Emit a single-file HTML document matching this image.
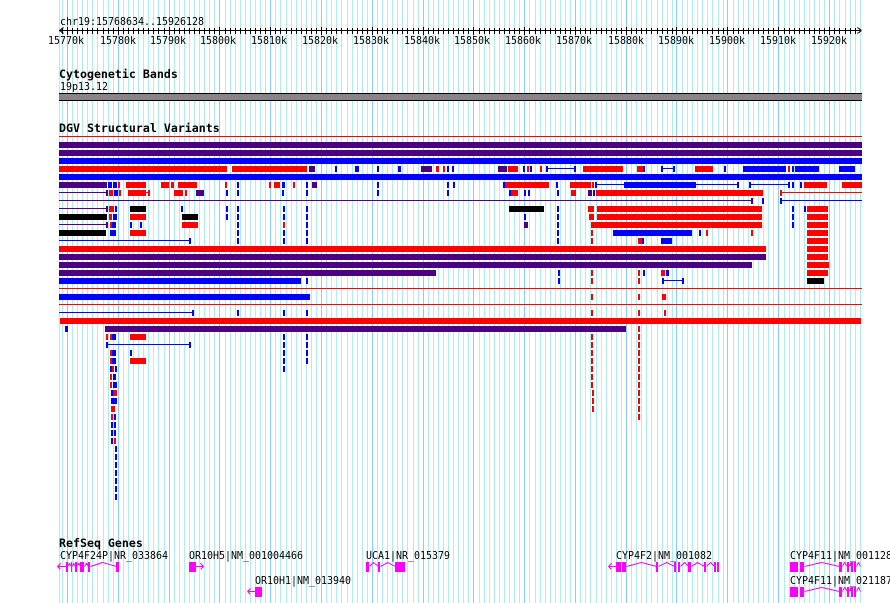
<!DOCTYPE html>
<html><head><meta charset="utf-8"><title>chr19</title>
<style>
html,body{margin:0;padding:0;background:#fff;width:890px;height:603px;overflow:hidden}
svg{display:block;position:absolute;left:0;top:0}
.r{fill:#f00}.b{fill:#00f}.p{fill:#4b0082}.k{fill:#000}
text{font-family:"DejaVu Sans Mono","Liberation Mono",monospace;font-size:11px;fill:#000}
text.t{font-weight:bold;font-size:11.62px}
.g{fill:#f0f}.gl{fill:none;stroke:#f0f;stroke-width:1}
</style></head><body>
<svg width="890" height="603" viewBox="0 0 890 603" shape-rendering="crispEdges">
<defs>
<path id="mn" d="M59 0V603M62 0V603M72 0V603M77 0V603M82 0V603M87 0V603M92 0V603M97 0V603M103 0V603M108 0V603M113 0V603M123 0V603M128 0V603M133 0V603M138 0V603M143 0V603M148 0V603M153 0V603M158 0V603M164 0V603M174 0V603M179 0V603M184 0V603M189 0V603M194 0V603M199 0V603M204 0V603M209 0V603M214 0V603M225 0V603M230 0V603M235 0V603M240 0V603M245 0V603M250 0V603M255 0V603M260 0V603M265 0V603M275 0V603M280 0V603M286 0V603M291 0V603M296 0V603M301 0V603M306 0V603M311 0V603M316 0V603M326 0V603M331 0V603M336 0V603M341 0V603M347 0V603M352 0V603M357 0V603M362 0V603M367 0V603M377 0V603M382 0V603M387 0V603M392 0V603M397 0V603M402 0V603M407 0V603M413 0V603M418 0V603M428 0V603M433 0V603M438 0V603M443 0V603M448 0V603M453 0V603M458 0V603M463 0V603M468 0V603M479 0V603M484 0V603M489 0V603M494 0V603M499 0V603M504 0V603M509 0V603M514 0V603M519 0V603M529 0V603M535 0V603M540 0V603M545 0V603M550 0V603M555 0V603M560 0V603M565 0V603M570 0V603M580 0V603M585 0V603M590 0V603M596 0V603M601 0V603M606 0V603M611 0V603M616 0V603M621 0V603M631 0V603M636 0V603M641 0V603M646 0V603M651 0V603M657 0V603M662 0V603M667 0V603M672 0V603M682 0V603M687 0V603M692 0V603M697 0V603M702 0V603M707 0V603M712 0V603M718 0V603M723 0V603M733 0V603M738 0V603M743 0V603M748 0V603M753 0V603M758 0V603M763 0V603M768 0V603M773 0V603M784 0V603M789 0V603M794 0V603M799 0V603M804 0V603M809 0V603M814 0V603M819 0V603M824 0V603M834 0V603M839 0V603M845 0V603M850 0V603M855 0V603M860 0V603"/>
<path id="mj" d="M67 0V603M118 0V603M169 0V603M219 0V603M270 0V603M321 0V603M372 0V603M423 0V603M473 0V603M524 0V603M575 0V603M626 0V603M676 0V603M727 0V603M778 0V603M829 0V603"/>
<clipPath id="c1"><rect x="60" y="28" width="800" height="6"/></clipPath>
<clipPath id="c2"><rect x="60" y="27" width="800" height="8"/></clipPath>
</defs>
<g transform="translate(.5 0)" fill="none" stroke-width="1">
<use href="#mn" stroke="#afeeee"/>
<use href="#mj" stroke="#87cefa"/>
</g>

<!-- ruler -->
<text x="60" y="25" textLength="144" lengthAdjust="spacingAndGlyphs">chr19:15768634..15926128</text>
<rect x="59" y="30" width="802" height="1" fill="#000"/>
<g clip-path="url(#c1)"><g transform="translate(.5 0)" fill="none" stroke="#000"><use href="#mn"/></g></g>
<g clip-path="url(#c2)"><g transform="translate(.5 0)" fill="none" stroke="#000"><use href="#mj"/></g></g>
<path d="M59.5 30.5L63.5 27.5M59.5 30.5L63.5 33.5M861.5 30.5L857.5 27.5M861.5 30.5L857.5 33.5" stroke="#000" fill="none"/>
<g>
<text x="48" y="44" textLength="36" lengthAdjust="spacingAndGlyphs">15770k</text><text x="100" y="44" textLength="36" lengthAdjust="spacingAndGlyphs">15780k</text><text x="150" y="44" textLength="36" lengthAdjust="spacingAndGlyphs">15790k</text><text x="200" y="44" textLength="36" lengthAdjust="spacingAndGlyphs">15800k</text><text x="251" y="44" textLength="36" lengthAdjust="spacingAndGlyphs">15810k</text><text x="302" y="44" textLength="36" lengthAdjust="spacingAndGlyphs">15820k</text><text x="353" y="44" textLength="36" lengthAdjust="spacingAndGlyphs">15830k</text><text x="404" y="44" textLength="36" lengthAdjust="spacingAndGlyphs">15840k</text><text x="454" y="44" textLength="36" lengthAdjust="spacingAndGlyphs">15850k</text><text x="505" y="44" textLength="36" lengthAdjust="spacingAndGlyphs">15860k</text><text x="556" y="44" textLength="36" lengthAdjust="spacingAndGlyphs">15870k</text><text x="608" y="44" textLength="36" lengthAdjust="spacingAndGlyphs">15880k</text><text x="658" y="44" textLength="36" lengthAdjust="spacingAndGlyphs">15890k</text><text x="709" y="44" textLength="36" lengthAdjust="spacingAndGlyphs">15900k</text><text x="760" y="44" textLength="36" lengthAdjust="spacingAndGlyphs">15910k</text><text x="811" y="44" textLength="36" lengthAdjust="spacingAndGlyphs">15920k</text>
</g>

<!-- cytoband -->
<text class="t" x="59" y="78">Cytogenetic Bands</text>
<text x="60" y="90" textLength="48" lengthAdjust="spacingAndGlyphs">19p13.12</text>
<rect x="59" y="93" width="803" height="8" fill="#000"/>
<rect x="59" y="94" width="803" height="6" fill="#888488"/>

<!-- DGV -->
<text class="t" x="59" y="132">DGV Structural Variants</text>
<rect class="r" x="59" y="136" width="803" height="1"/>
<rect class="p" x="59" y="142" width="803" height="6"/>
<rect class="p" x="59" y="150" width="803" height="6"/>
<rect class="b" x="59" y="158" width="803" height="6"/>

<g transform="translate(0 166)">
<path class="r" d="M59 0H227v6H59zM232 0H307v6H232zM436 0H439v6H436zM443 0H445v6H443zM508 0H518v6H508zM527 0H529v6H527zM540 0H542v6H540zM583 0H623v6H583zM637 0H643v6H637zM695 0H713v6H695zM788 0H790v6H788z"/>
<path class="p" d="M309 0H315v6H309zM421 0H432v6H421zM498 0H507v6H498z"/>
<path class="b" d="M335 0H337v6H335zM355 0H359v6H355zM377 0H379v6H377zM398 0H401v6H398zM447 0H449v6H447zM452 0H454v6H452zM523 0H525v6H523zM530 0H532v6H530zM546 0H548v6H546zM548 2H574v1H548zM574 0H576v6H574zM643 0H645v6H643zM661 0H663v6H661zM663 2H673v1H663zM673 0H675v6H673zM724 0H726v6H724zM743 0H786v6H743zM792 0H794v6H792zM795 0H819v6H795zM839 0H855v6H839z"/>
</g>
<rect class="b" x="59" y="174" width="803" height="6"/>

<g transform="translate(0 182)">
<path class="p" d="M59 0H107v6H59zM312 0H317v6H312z"/>
<path class="b" d="M108 0H112v6H108zM113 0H117v6H113zM237 0H239v6H237zM282 0H285v6H282zM306 0H308v6H306zM377 0H379v6H377zM447 0H449v6H447zM453 0H455v6H453zM503 0H505v6H503zM556 0H558v6H556zM595 0H597v6H595zM597 2H624v1H597zM624 0H696v6H624zM696 2H737v1H696zM737 0H739v6H737zM749 0H751v6H749zM751 2H788v1H751zM788 0H790v6H788zM792 0H794v6H792zM800 0H802v6H800z"/>
<path class="r" d="M118 0H120v6H118zM126 0H146v6H126zM161 0H169v6H161zM171 0H174v6H171zM178 0H197v6H178zM225 0H227v6H225zM269 0H271v6H269zM274 0H280v6H274zM293 0H295v6H293zM505 0H549v6H505zM570 0H591v6H570zM592 0H594v6H592zM804 0H827v6H804zM842 0H862v6H842z"/>
</g>

<g transform="translate(0 190)">
<path class="p" d="M59 2H106v1H59zM106 0H108v6H106zM196 0H204v6H196zM588 0H592v6H588z"/>
<path class="r" d="M109 0H113v6H109zM119 0H121v6H119zM128 0H146v6H128zM146 2H148v1H146zM148 0H150v6H148zM174 0H183v6H174zM185 0H187v6H185zM511 0H518v6H511zM571 0H576v6H571zM596 0H763v6H596zM780 0H782v6H780zM782 2H862v1H782z"/>
<path class="b" d="M114 0H118v6H114zM226 0H228v6H226zM237 0H239v6H237zM282 0H284v6H282zM306 0H308v6H306zM377 0H379v6H377zM447 0H449v6H447zM509 0H511v6H509zM524 0H526v6H524zM528 0H530v6H528zM557 0H559v6H557zM593 0H595v6H593z"/>
</g>

<g transform="translate(0 198)">
<path class="p" d="M59 2H751v1H59zM751 0H753v6H751z"/>
<path class="b" d="M762 0H764v6H762zM780 0H782v6H780zM782 2H862v1H782z"/>
</g>

<g transform="translate(0 206)">
<path class="p" d="M59 2H106v1H59zM106 0H108v6H106z"/>
<path class="r" d="M109 0H114v6H109zM588 0H594v6H588zM597 0H762v6H597zM807 0H828v6H807z"/>
<path class="b" d="M115 0H117v6H115zM181 0H183v6H181zM226 0H228v6H226zM237 0H239v6H237zM283 0H285v6H283zM306 0H308v6H306zM557 0H559v6H557zM792 0H794v6H792zM804 0H806v6H804z"/>
<path class="k" d="M130 0H146v6H130zM509 0H544v6H509z"/>
</g>

<g transform="translate(0 214)">
<path class="k" d="M59 0H107v6H59zM182 0H198v6H182z"/>
<path class="r" d="M109 0H112v6H109zM130 0H146v6H130zM589 0H594v6H589zM597 0H762v6H597zM807 0H828v6H807z"/>
<path class="b" d="M113 0H117v6H113zM226 0H228v6H226zM237 0H239v6H237zM283 0H285v6H283zM306 0H308v6H306zM524 0H526v6H524zM557 0H559v6H557zM792 0H794v6H792z"/>
</g>

<g transform="translate(0 222)">
<path class="p" d="M59 2H106v1H59zM106 0H108v6H106zM524 0H528v6H524z"/>
<path class="r" d="M110 0H112v6H110zM182 0H198v6H182zM283 0H285v6H283zM591 0H762v6H591zM807 0H828v6H807z"/>
<path class="b" d="M112 0H116v6H112zM130 0H132v6H130zM140 0H142v6H140zM237 0H239v6H237zM306 0H308v6H306zM557 0H559v6H557zM792 0H794v6H792z"/>
</g>

<g transform="translate(0 230)">
<path class="k" d="M59 0H106v6H59z"/>
<path class="b" d="M110 0H116v6H110zM237 0H239v6H237zM283 0H285v6H283zM306 0H308v6H306zM557 0H559v6H557zM613 0H692v6H613zM699 0H701v6H699z"/>
<path class="r" d="M130 0H146v6H130zM591 0H593v6H591zM706 0H708v6H706zM751 0H753v6H751zM807 0H828v6H807z"/>
</g>

<g transform="translate(0 238)">
<path class="b" d="M59 2H189v1H59zM189 0H191v6H189zM237 0H239v6H237zM283 0H285v6H283zM306 0H308v6H306zM557 0H559v6H557zM642 0H644v6H642zM661 0H672v6H661z"/>
<path class="r" d="M591 0H593v6H591zM638 0H642v6H638zM807 0H828v6H807z"/>
</g>

<g class="r"><rect x="59" y="246" width="707" height="6"/><rect x="807" y="246" width="21" height="6"/><rect x="807" y="254" width="21" height="6"/><rect x="807" y="262" width="22" height="6"/><rect x="807" y="270" width="21" height="6"/></g>
<g class="p"><rect x="59" y="254" width="707" height="6"/><rect x="59" y="262" width="693" height="6"/><rect x="59" y="270" width="377" height="6"/></g>

<g transform="translate(0 270)">
<path class="b" d="M558 0H560v6H558zM643 0H645v6H643zM666 0H669v6H666z"/>
<path class="r" d="M591 0H593v6H591zM638 0H640v6H638zM661 0H665v6H661z"/>
</g>
<g transform="translate(0 278)">
<path class="b" d="M59 0H301v6H59zM306 0H308v6H306zM558 0H560v6H558zM662 0H664v6H662zM664 2H682v1H664zM682 0H684v6H682z"/>
<path class="r" d="M591 0H593v6H591zM638 0H640v6H638z"/>
<path class="k" d="M807 0H824v6H807z"/>
</g>
<rect class="r" x="59" y="288" width="803" height="1"/>
<g transform="translate(0 294)">
<path class="b" d="M59 0H310v6H59z"/>
<path class="r" d="M591 0H593v6H591zM638 0H640v6H638zM662 0H666v6H662z"/>
</g>
<rect class="r" x="59" y="304" width="803" height="1"/>
<g transform="translate(0 310)">
<path class="b" d="M59 2H192v1H59zM192 0H194v6H192zM237 0H239v6H237zM283 0H285v6H283zM306 0H308v6H306z"/>
<path class="r" d="M591 0H593v6H591zM638 0H640v6H638zM664 0H666v6H664z"/>
</g>
<rect class="r" x="60" y="318" width="801" height="6"/>
<g transform="translate(0 326)">
<path class="b" d="M65 0H68v6H65z"/>
<path class="p" d="M105 0H626v6H105z"/>
<path class="r" d="M638 0H640v6H638z"/>
</g>
<g transform="translate(0 334)">
<path class="r" d="M106 0H108v6H106zM110 0H112v6H110zM130 0H146v6H130zM591 0H593v6H591zM638 0H640v6H638z"/>
<path class="b" d="M112 0H116v6H112zM283 0H285v6H283zM306 0H308v6H306z"/>
</g>
<g transform="translate(0 342)">
<path class="b" d="M106 0H108v6H106zM108 2H189v1H108zM189 0H191v6H189zM283 0H285v6H283zM306 0H308v6H306z"/>
<path class="r" d="M591 0H593v6H591zM638 0H640v6H638z"/>
</g>
<g transform="translate(0 350)">
<path class="r" d="M110 0H112v6H110zM591 0H593v6H591zM638 0H640v6H638z"/>
<path class="b" d="M112 0H116v6H112zM130 0H132v6H130zM283 0H285v6H283zM306 0H308v6H306z"/>
</g>
<g transform="translate(0 358)">
<path class="r" d="M110 0H112v6H110zM130 0H146v6H130zM591 0H593v6H591zM638 0H640v6H638z"/>
<path class="b" d="M112 0H116v6H112zM283 0H285v6H283zM306 0H308v6H306z"/>
</g>
<g transform="translate(0 366)">
<path class="b" d="M110 0H112v6H110zM115 0H117v6H115zM283 0H285v6H283z"/>
<path class="r" d="M112 0H114v6H112zM591 0H593v6H591zM638 0H640v6H638z"/>
</g>
<g transform="translate(0 374)">
<path class="r" d="M110 0H112v6H110zM591 0H593v6H591zM638 0H640v6H638z"/>
<path class="b" d="M113 0H116v6H113z"/>
</g>
<g transform="translate(0 382)">
<path class="r" d="M110 0H112v6H110zM591 0H593v6H591zM638 0H640v6H638z"/>
<path class="b" d="M113 0H117v6H113z"/>
</g>
<g transform="translate(0 390)">
<path class="b" d="M111 0H113v6H111z"/>
<path class="r" d="M113 0H117v6H113zM592 0H594v6H592zM638 0H640v6H638z"/>
</g>
<g transform="translate(0 398)">
<path class="b" d="M111 0H117v6H111z"/>
<path class="r" d="M592 0H594v6H592zM638 0H640v6H638z"/>
</g>
<g transform="translate(0 406)">
<path class="r" d="M111 0H115v6H111zM592 0H594v6H592zM638 0H640v6H638z"/>
</g>
<g transform="translate(0 414)">
<path class="r" d="M111 0H113v6H111zM638 0H640v6H638z"/>
<path class="b" d="M114 0H116v6H114z"/>
</g>
<g transform="translate(0 422)"><path class="b" d="M111 0H113v6H111zM114 0H116v6H114z"/></g>
<g transform="translate(0 430)"><path class="b" d="M111 0H113v6H111zM114 0H116v6H114z"/></g>
<g transform="translate(0 438)"><path class="b" d="M111 0H113v6H111z"/><path class="r" d="M114 0H116v6H114z"/></g>
<path class="b" d="M115 446H117v6H115zM115 454H117v6H115zM115 462H117v6H115zM115 470H117v6H115zM115 478H117v6H115zM115 486H117v6H115zM115 494H117v6H115z"/>

<!-- RefSeq -->
<text class="t" x="59" y="547">RefSeq Genes</text>
<text x="60" y="559" textLength="108" lengthAdjust="spacingAndGlyphs">CYP4F24P|NR_033864</text>
<text x="189" y="559" textLength="114" lengthAdjust="spacingAndGlyphs">OR10H5|NM_001004466</text>
<text x="255" y="584" textLength="96" lengthAdjust="spacingAndGlyphs">OR10H1|NM_013940</text>
<text x="366" y="559" textLength="84" lengthAdjust="spacingAndGlyphs">UCA1|NR_015379</text>
<text x="616" y="559" textLength="96" lengthAdjust="spacingAndGlyphs">CYP4F2|NM_001082</text>
<text x="790" y="559" textLength="102" lengthAdjust="spacingAndGlyphs">CYP4F11|NM_001128</text>
<text x="790" y="584" textLength="102" lengthAdjust="spacingAndGlyphs">CYP4F11|NM_021187</text>

<!-- gene 1 -->
<path class="g" d="M66 562h2v10h-2zM71 562h1v10h-1zM75 562h2v10h-2zM80 562h4v10h-4zM88 562h2v10h-2zM116 562h3v10h-3z"/>
<path class="gl" d="M57.5 566.5H66.5M57.5 566.5L60.5 563.5M57.5 566.5L60.5 569.5M67.5 566.5L69.5 563.5L71.5 566.5M72.5 566.5L73.5 563.5L75.5 566.5M76.5 566.5L78.5 563.5L80.5 566.5M84.5 566.5L86.5 563.5L88.5 566.5M90.5 566.5L102.5 562.5L116.5 566.5"/>
<!-- OR10H5 -->
<rect class="g" x="189" y="562" width="7" height="10"/>
<path class="gl" d="M196 566.5H203.5M203.5 566.5L200.5 563.5M203.5 566.5L200.5 569.5"/>
<!-- OR10H1 -->
<rect class="g" x="255" y="587" width="7" height="10"/>
<path class="gl" d="M247.5 591.5H255M247.5 591.5L250.5 588.5M247.5 591.5L250.5 594.5"/>
<!-- UCA1 -->
<path class="g" d="M366 562h3v10h-3zM378 562h2v10h-2zM395 562h10v10h-10z"/>
<path class="gl" d="M369.5 566.5L373.5 562.5L378.5 566.5M380.5 566.5L387.5 562.5L395.5 566.5"/>
<!-- CYP4F2 -->
<path class="g" d="M616 562h5v10h-5zM622 562h4v10h-4zM656 562h2v10h-2zM674 562h2v10h-2zM678 562h2v10h-2zM688 562h3v10h-3zM704 562h2v10h-2zM714 562h2v10h-2zM717 562h2v10h-2z"/>
<path class="gl" d="M608.5 566.5H616M608.5 566.5L611.5 563.5M608.5 566.5L611.5 569.5M626.5 566.5L641.5 562.5L656.5 566.5M658.5 566.5L666.5 562.5L674.5 566.5M680.5 566.5L684.5 562.5L688.5 566.5M691.5 566.5L697.5 562.5L704.5 566.5M706.5 566.5L710.5 562.5L714.5 566.5"/>
<!-- CYP4F11 -->
<path class="g" d="M790 562h8v10h-8zM800 562h4v10h-4zM839 562h3v10h-3zM847 562h2v10h-2zM851 562h2v10h-2zM854 562h2v10h-2zM790 587h8v10h-8zM800 587h4v10h-4zM839 587h3v10h-3zM847 587h2v10h-2zM851 587h2v10h-2zM854 587h2v10h-2z"/>
<path class="gl" d="M804.5 566.5L821.5 562.5L839.5 566.5M842.5 566.5L844.5 562.5L847.5 566.5M849.5 566.5L850.5 563.5L851.5 566.5M856.5 566.5L858.5 562.5L860.5 566.5M804.5 591.5L821.5 587.5L839.5 591.5M842.5 591.5L844.5 587.5L847.5 591.5M849.5 591.5L850.5 588.5L851.5 591.5M856.5 591.5L858.5 587.5L860.5 591.5"/>
</svg>
</body></html>
